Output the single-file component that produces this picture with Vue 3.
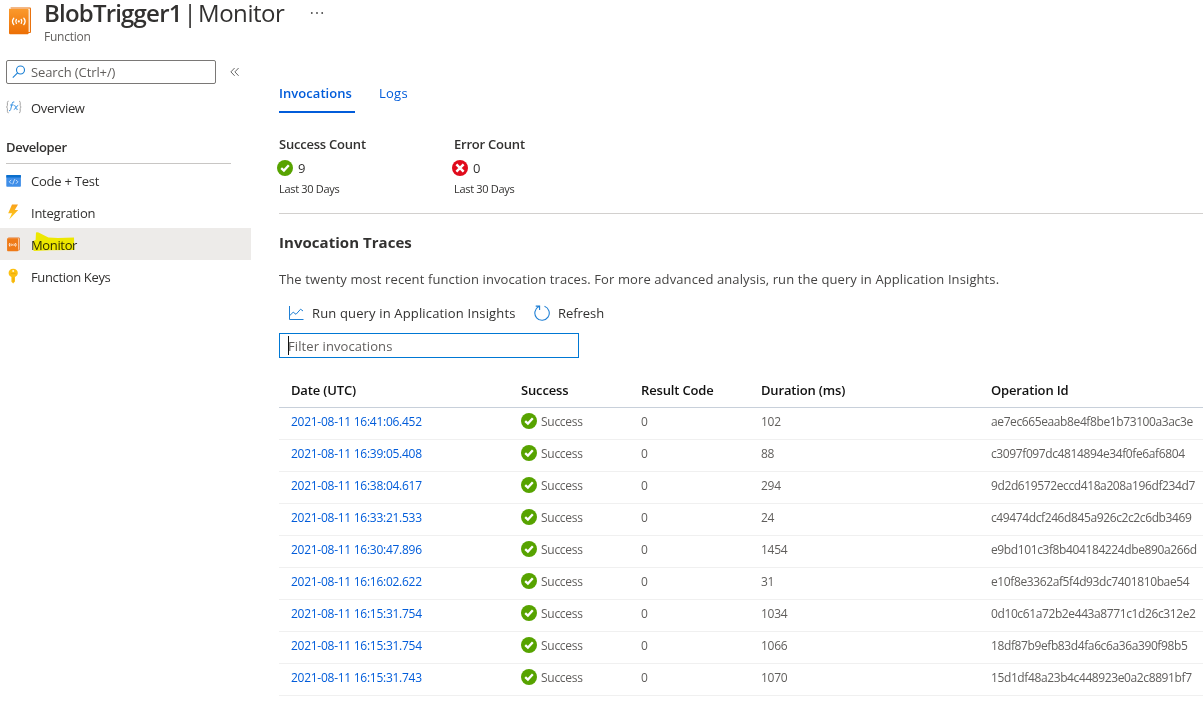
<script setup>
const rows = [
  ['2021-08-11 16:41:06.452', '102', 'ae7ec665eaab8e4f8be1b73100a3ac3e'],
  ['2021-08-11 16:39:05.408', '88', 'c3097f097dc4814894e34f0fe6af6804'],
  ['2021-08-11 16:38:04.617', '294', '9d2d619572eccd418a208a196df234d7'],
  ['2021-08-11 16:33:21.533', '24', 'c49474dcf246d845a926c2c2c6db3469'],
  ['2021-08-11 16:30:47.896', '1454', 'e9bd101c3f8b404184224dbe890a266d'],
  ['2021-08-11 16:16:02.622', '31', 'e10f8e3362af5f4d93dc7401810bae54'],
  ['2021-08-11 16:15:31.754', '1034', '0d10c61a72b2e443a8771c1d26c312e2'],
  ['2021-08-11 16:15:31.754', '1066', '18df87b9efb83d4fa6c6a36a390f98b5'],
  ['2021-08-11 16:15:31.743', '1070', '15d1df48a23b4c448923e0a2c8891bf7'],
]
</script>

<template>
  <div class="page">
    <header class="head">
      <svg class="logo" width="23" height="28" viewBox="0 0 23 28">
        <defs>
          <linearGradient id="cover" x1="0" y1="0" x2="0" y2="1">
            <stop offset="0" stop-color="#fb9a2c" />
            <stop offset="1" stop-color="#ec6f05" />
          </linearGradient>
        </defs>
        <path d="M1.6.6H21Q22 .6 22 1.6V25Q22 26 21 26H2Z" fill="#e8720f" />
        <path d="M1 1.5H20.9V25H19Z" fill="#fff3e4" />
        <path d="M1 1.9H18.6Q19.6 1.9 19.6 2.9V26.2Q19.6 27.2 18.6 27.2H1.2Q0 27.2 0 26V1.6Z" fill="url(#cover)" />
        <path d="M4.8 11.2Q2.2 14.4 4.8 17.6M7.4 12.5Q6 14.4 7.4 16.3M14.8 11.2Q17.4 14.4 14.8 17.6M12.2 12.5Q13.6 14.4 12.2 16.3" fill="none" stroke="#fff" stroke-width="1.3" stroke-linecap="round" />
        <circle cx="9.8" cy="14.4" r="1.1" fill="#fff" />
      </svg>
      <div class="titles">
        <h1><b>BlobTrigger1</b><span class="bar">|</span><span class="mon">Monitor</span></h1>
        <div class="sub">Function</div>
      </div>
      <svg class="dots" width="14" height="4" viewBox="0 0 14 4" fill="#444">
        <circle cx="1.8" cy="2" r=".9" /><circle cx="7" cy="2" r=".9" /><circle cx="12.2" cy="2" r=".9" />
      </svg>
    </header>

    <div class="body">
      <nav class="side">
        <div class="searchrow">
          <div class="search">
            <svg width="14" height="14" viewBox="0 0 14 14" fill="none" stroke="#1a7fd4" stroke-width="1.1">
              <circle cx="8.5" cy="5" r="4" /><path d="M5.6 7.9L.8 12.7" />
            </svg>
            <span>Search (Ctrl+/)</span>
          </div>
          <svg width="10" height="10" viewBox="0 0 10 10" fill="none" stroke="#555" stroke-width=".9">
            <path d="M4.6 1L.9 4.9L4.6 8.8M8.6 1L4.9 4.9L8.6 8.8" />
          </svg>
        </div>
        <div class="item over">
          <svg class="ic" width="16" height="16" viewBox="0 0 16 16" fill="none">
            <path d="M2.6 2.2Q1.4 2.2 1.4 3.4V6.4Q1.4 7.9.4 8Q1.4 8.1 1.4 9.6V12.6Q1.4 13.8 2.6 13.8M13 2.2Q14.2 2.2 14.2 3.4V6.4Q14.2 7.9 15.2 8Q14.2 8.1 14.2 9.6V12.6Q14.2 13.8 13 13.8" stroke="#a3a3a3" />
            <path d="M8.3 3Q6.7 2.2 6.1 4.6L4.7 10.4Q4.2 12.2 3 11.7M4.2 6H7.6M8.2 6.8Q9.2 6 9.6 7.6L10.3 9.8Q10.7 11.2 11.7 10.2M12.2 6.4Q11.2 6.5 10 8.5Q8.6 10.7 7.8 10.5" stroke="#3a93e2" />
          </svg>
          <span class="tight">Overview</span>
        </div>
        <div class="group">Developer</div>
        <div class="item">
          <svg class="ic" width="16" height="16" viewBox="0 0 16 16">
            <rect x=".3" y="3" width="14.6" height="11.8" rx=".7" fill="#3f8ee8" />
            <path d="M.3 5.6V3.7Q.3 3 1 3H14.2Q14.9 3 14.9 3.7V5.6Z" fill="#0a6fcc" />
            <path d="M5.3 7.8L3.3 9.8L5.3 11.8M9.9 7.8L11.9 9.8L9.9 11.8M8.6 7.3L6.7 12.3" fill="none" stroke="#d5e9ff" stroke-width=".9" />
          </svg>
          <span>Code + Test</span>
        </div>
        <div class="item">
          <svg class="ic" width="16" height="16" viewBox="0 0 16 16">
            <defs>
              <linearGradient id="bolt" x1="0" y1="0" x2="0" y2="1">
                <stop offset="0" stop-color="#f9a01c" />
                <stop offset="1" stop-color="#ffd21a" />
              </linearGradient>
            </defs>
            <path d="M6 .6H12L8.8 6H12.2L3.2 15.6L6 9.2H2.2Z" fill="url(#bolt)" />
          </svg>
          <span>Integration</span>
        </div>
        <div class="item sel">
          <svg class="ic" width="16" height="16" viewBox="0 0 16 16">
            <rect x="1.8" y="1.4" width="12" height="13.2" rx="1" fill="#e47a2e" />
            <path d="M2 2.4H12.9V13.7H2Z" fill="#fbe3cf" />
            <rect x="1.1" y="2.2" width="11.1" height="13.1" rx=".8" fill="#ef7a17" />
            <path d="M3.8 7.1Q2.6 8.8 3.8 10.5M9.5 7.1Q10.7 8.8 9.5 10.5M5.3 7.7Q4.7 8.8 5.3 9.9M8 7.7Q8.6 8.8 8 9.9" fill="none" stroke="#fff" stroke-width=".9" />
            <circle cx="6.65" cy="8.8" r=".6" fill="#fff" />
          </svg>
          <span class="tight">Monitor</span>
          <svg class="mark" width="42" height="20" viewBox="0 0 42 20">
            <path d="M3 .4Q5 -.2 7 1.2L15.4 5.4L25 6L41 5.4L41.4 18L17 18.3L.6 19L0 9L2.6 8Z" fill="#fffb00" />
          </svg>
        </div>
        <div class="item">
          <svg class="ic" width="16" height="16" viewBox="0 0 16 16">
            <path d="M7.2.7C10 .7 11.8 2.4 11.8 5C11.8 7 10.6 8.3 9 9V13.6L7.2 15.6L5.4 13.8V9C3.7 8.3 2.6 7 2.6 5C2.6 2.4 4.4.7 7.2.7Z" fill="#fcc012" />
            <circle cx="7.2" cy="3" r="1" fill="#fff6d6" />
            <path d="M4.8 5.6H9.6M7.2 9.4V13.9" stroke="#e8a510" stroke-width=".8" />
          </svg>
          <span class="tight">Function Keys</span>
        </div>
      </nav>

      <main class="main">
        <div class="tabs">
          <span class="tab on">Invocations</span><span class="tab">Logs</span>
        </div>
        <div class="counts">
          <div class="count">
            <b>Success Count</b>
            <div class="num">
              <svg width="16" height="16" viewBox="0 0 16 16">
                <circle cx="8" cy="8" r="8" fill="#57a300" />
                <path d="M4.2 8.1L6.9 10.6L11.8 5.2" fill="none" stroke="#fff" stroke-width="2.3" />
              </svg>
              <span>9</span>
            </div>
            <small>Last 30 Days</small>
          </div>
          <div class="count">
            <b>Error Count</b>
            <div class="num">
              <svg width="16" height="16" viewBox="0 0 16 16">
                <circle cx="8" cy="8" r="8" fill="#e00b1c" />
                <path d="M4.4 4.4L11.6 11.6M11.6 4.4L4.4 11.6" stroke="#fff" stroke-width="2.5" />
              </svg>
              <span>0</span>
            </div>
            <small>Last 30 Days</small>
          </div>
        </div>
        <h2>Invocation Traces</h2>
        <p class="desc">The twenty most recent function invocation traces. For more advanced analysis, run the query in Application Insights.</p>
        <div class="cmds">
          <div class="cmd run">
            <svg width="16" height="16" viewBox="0 0 16 16" fill="none" stroke="#1f7fd4">
              <path d="M1.5 1V14.5H15.5M1.8 10.5L5.2 7.2L8 9.3L12.6 4.2L15 6" />
            </svg>
            <span>Run query in Application Insights</span>
          </div>
          <div class="cmd">
            <svg width="16" height="16" viewBox="0 0 16 16" fill="none" stroke="#1f7fd4" stroke-width="1.1">
              <path d="M10.5 1.3A7.2 7.2 0 1 1 4.9 1.6M1.7 1.1H5.6V5" />
            </svg>
            <span>Refresh</span>
          </div>
        </div>
        <div class="filter"><i class="caret"></i><span>Filter invocations</span></div>
        <div class="table">
          <div class="tr th">
            <span>Date (UTC)</span><span>Success</span><span>Result Code</span><span>Duration (ms)</span><span>Operation Id</span>
          </div>
          <div v-for="r in rows" :key="r[2]" class="tr">
            <span class="date">{{ r[0] }}</span>
            <span class="ok">
              <svg width="16" height="16" viewBox="0 0 16 16">
                <circle cx="8" cy="8" r="8" fill="#57a300" />
                <path d="M4.2 8.1L6.9 10.6L11.8 5.2" fill="none" stroke="#fff" stroke-width="2.3" />
              </svg>Success
            </span>
            <span>0</span>
            <span>{{ r[1] }}</span>
            <span class="id">{{ r[2] }}</span>
          </div>
        </div>
      </main>
    </div>
  </div>
</template>

<style scoped>
.page {
  width: 1203px;
  height: 707px;
  overflow: hidden;
  background: #fff;
  color: #323130;
  font: 13px 'Open Sans', 'Noto Sans', sans-serif;
  white-space: nowrap;
}
.page svg { display: block; flex: none; }
.head { display: flex; height: 48px; padding-left: 9px; }
.logo { margin-top: 7px; }
.titles { margin-left: 12px; width: 267px; }
h1 { display: flex; margin: 0; font-size: 24px; line-height: 26px; height: 28px; font-weight: 400; }
h1 b { font-weight: 600; letter-spacing: -0.8px; width: 138px; }
.bar { width: 16px; text-align: center; }
.mon { letter-spacing: -0.45px; }
.sub { font-size: 12px; line-height: 17px; letter-spacing: -0.25px; color: #605e5c; }
.dots { margin-top: 11px; margin-left: -1px; }

.body { display: flex; }
.side { width: 251px; flex: none; padding-top: 12px; }
.searchrow { display: flex; align-items: center; gap: 14px; padding-left: 6px; height: 24px; }
.search {
  display: flex;
  align-items: center;
  box-sizing: border-box;
  width: 210px;
  height: 24px;
  border: 1px solid #7a7876;
  border-radius: 2px;
  padding-left: 5px;
  gap: 5px;
  color: #605e5c;
  letter-spacing: -0.1px;
}
.item {
  position: relative;
  display: flex;
  align-items: center;
  box-sizing: border-box;
  height: 32px;
  padding: 1px 0 0 6px;
  gap: 9px;
  letter-spacing: -0.24px;
}
.item .ic { margin-top: -2px; }
.over { margin-top: 7px; }
.tight { letter-spacing: -0.35px; }
.sel { background: #edebe9; }
.mark { position: absolute; left: 33px; top: 4px; mix-blend-mode: multiply; }
.group {
  margin: 9px 20px 0 6px;
  height: 31px;
  line-height: 30px;
  border-bottom: 1px solid #c8c6c4;
  font-weight: 600;
  letter-spacing: -0.4px;
}

.main { flex: 1; min-width: 0; padding: 32px 0 0 28px; }
.tabs { display: flex; gap: 24px; height: 33px; }
.tab { box-sizing: border-box; height: 33px; line-height: 27px; color: #015cda; letter-spacing: 0.25px; }
.tab.on { width: 76px; border-bottom: 2px solid #015cda; font-weight: 600; letter-spacing: 0.05px; }
.counts { display: flex; height: 100px; border-bottom: 1px solid #d2d0ce; }
.count { width: 175px; padding-top: 21px; }
.count b { display: block; font-weight: 600; line-height: 20px; letter-spacing: -0.22px; }
.num { display: flex; align-items: center; gap: 5px; height: 16px; margin: 6px 0 0 -2px; }
.count small { display: block; margin-top: 4px; font-size: 11px; line-height: 18px; letter-spacing: -0.31px; }
h2 { margin: 18px 0 0; font-size: 15px; font-weight: 700; line-height: 21px; letter-spacing: 0.04px; }
.desc { margin: 16px 0 0; line-height: 21px; letter-spacing: 0.105px; color: #454443; }
.cmds { display: flex; gap: 18px; margin: 13px 0 0 9px; height: 20px; }
.cmd { display: flex; align-items: center; gap: 8px; letter-spacing: -0.05px; }
.run { letter-spacing: 0.15px; width: 228px; }
.filter {
  display: flex;
  align-items: center;
  box-sizing: border-box;
  width: 300px;
  height: 25px;
  margin-top: 10px;
  padding-left: 8px;
  border: 1px solid #0078d4;
  color: #605e5c;
  letter-spacing: 0.09px;
}
.caret { width: 1px; height: 19px; margin-right: -1px; background: #111; }
.table { margin-top: 15px; }
.tr {
  display: grid;
  grid-template-columns: 230px 120px 120px 230px 1fr;
  box-sizing: border-box;
  height: 32px;
  padding-left: 12px;
  border-bottom: 1px solid #f0f0f0;
  font-size: 12px;
  line-height: 27px;
  letter-spacing: -0.28px;
  color: #605e5c;
}
.th {
  height: 35px;
  border-color: #c8d0da;
  font-size: 13px;
  font-weight: 600;
  line-height: 34px;
  letter-spacing: -0.16px;
  color: #111;
}
.date { color: #015cda; letter-spacing: -0.27px; }
.ok { display: flex; gap: 4px; }
.ok svg { margin-top: 5px; }
.id { letter-spacing: -0.39px; }
</style>
